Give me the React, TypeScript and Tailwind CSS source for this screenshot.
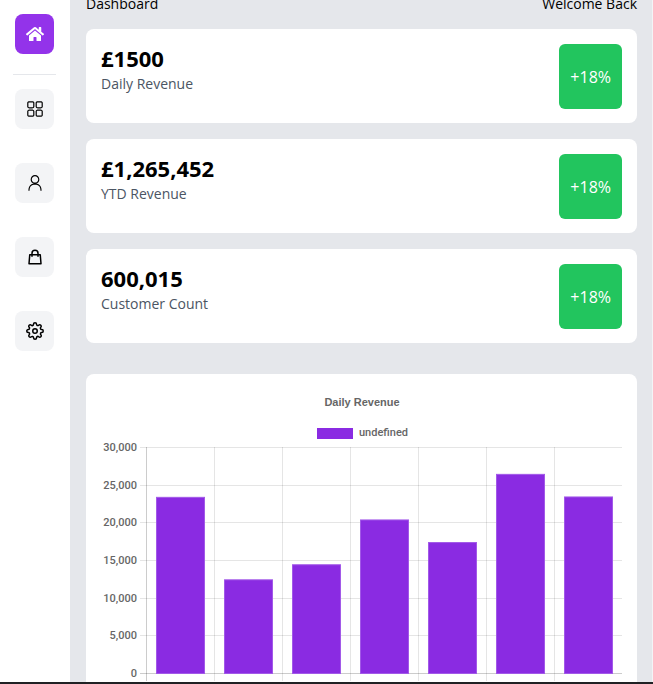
import type { ReactNode } from 'react';
import { FaHome } from 'react-icons/fa';
import { RxDashboard, RxPerson } from 'react-icons/rx';
import { HiOutlineShoppingBag } from 'react-icons/hi';
import { FiSettings } from 'react-icons/fi';

const links: { label: string; icon: ReactNode }[] = [
  { label: 'Dashboard', icon: <RxDashboard size={18} /> },
  { label: 'Customers', icon: <RxPerson size={18} /> },
  { label: 'Orders', icon: <HiOutlineShoppingBag size={18} /> },
  { label: 'Settings', icon: <FiSettings size={18} /> },
];

const stats = [
  { value: '£1500', label: 'Daily Revenue', change: '+18%' },
  { value: '£1,265,452', label: 'YTD Revenue', change: '+18%' },
  { value: '600,015', label: 'Customer Count', change: '+18%' },
];

const revenue = [23450, 12500, 14500, 20450, 17450, 26500, 23500];
const ticks = [30000, 25000, 20000, 15000, 10000, 5000, 0];

// Plot area inside the chart's own coordinate system.
const left = 45;
const right = 521;
const top = 58;
const bottom = 284;
const step = (right - left) / revenue.length;
const yOf = (value: number) => bottom - (value / 30000) * (bottom - top);

function RevenueChart() {
  return (
    <svg viewBox="0 0 521 310" role="img" aria-label="Daily Revenue" className="block w-full font-['Liberation_Sans',Arial,sans-serif] text-[11px]">
      <text x={261} y={17} textAnchor="middle" fill="#666" className="font-bold">Daily Revenue</text>
      <rect x={216} y={39} width={36} height={11} fill="#8a2be2" />
      <text x={258} y={47} fill="#666" className="font-['Roboto',sans-serif] font-medium">undefined</text>
      {ticks.map((tick) => (
        <g key={tick}>
          <path d={`M${left - 6} ${Math.round(yOf(tick)) + 0.5}H${right}`} stroke="#000" strokeOpacity={tick === 0 ? 0.2 : 0.1} />
          <text x={36} y={Math.round(yOf(tick)) + 4} textAnchor="end" fill="#666" className="font-['Roboto',sans-serif] font-medium">{tick.toLocaleString('en-US')}</text>
        </g>
      ))}
      {revenue.map((_, i) => (
        <path key={i} d={`M${left + step * i + 0.5} ${top}V${bottom + 8}`} stroke="#000" strokeOpacity={i === 0 ? 0.2 : 0.1} />
      ))}
      {revenue.map((value, i) => (
        <rect key={i} x={left + step * i + 10.5} y={yOf(value) + 1} width={48} height={bottom - yOf(value) - 0.5} fill="#8a2be2" stroke="#a259e8" />
      ))}
    </svg>
  );
}

export default function App() {
  return (
    <div className="flex h-screen overflow-hidden border-b-2 border-[#202124] bg-white font-['Open_Sans','Noto_Sans',sans-serif] text-sm text-black">
      <nav aria-label="Main" className="flex w-[70px] shrink-0 flex-col items-center pt-[14px] pr-[2px]">
        <a href="#home" aria-label="Home" className="flex h-10 w-[39px] items-center justify-center rounded-lg bg-[#9333ea] pl-px text-white">
          <FaHome size={18} />
        </a>
        <hr className="mt-5 mb-[14px] w-[43px] border-[#e5e7eb]" />
        <div className="flex flex-col gap-[34px]">
          {links.map(({ label, icon }) => (
            <a key={label} href={`#${label.toLowerCase()}`} aria-label={label} className="flex h-10 w-[39px] items-center justify-center rounded-lg bg-[#f3f4f6] pl-px">
              {icon}
            </a>
          ))}
        </div>
      </nav>
      <main className="min-w-0 flex-1 border-r border-[#f3f4f6] bg-[#e5e7eb] pr-[15px] pl-4">
        <header className="-mt-[7px] mb-[14px] flex justify-between leading-[22px]">
          <h2>Dashboard</h2>
          <h2>Welcome Back</h2>
        </header>
        <section className="flex flex-col gap-4">
          {stats.map(({ value, label, change }) => (
            <div key={label} className="flex justify-between rounded-lg bg-white p-[15px] pb-[14px]">
              <div className="pb-[14px]">
                <p className="text-[22px] leading-[29px] font-bold">{value}</p>
                <p className="leading-[22px] text-[#4b5563]">{label}</p>
              </div>
              <p className="flex items-center rounded-md bg-[#22c55e] px-[11px] text-base text-white">{change}</p>
            </div>
          ))}
        </section>
        <section className="mt-[31px] rounded-lg bg-white p-[15px]">
          <RevenueChart />
        </section>
      </main>
    </div>
  );
}
